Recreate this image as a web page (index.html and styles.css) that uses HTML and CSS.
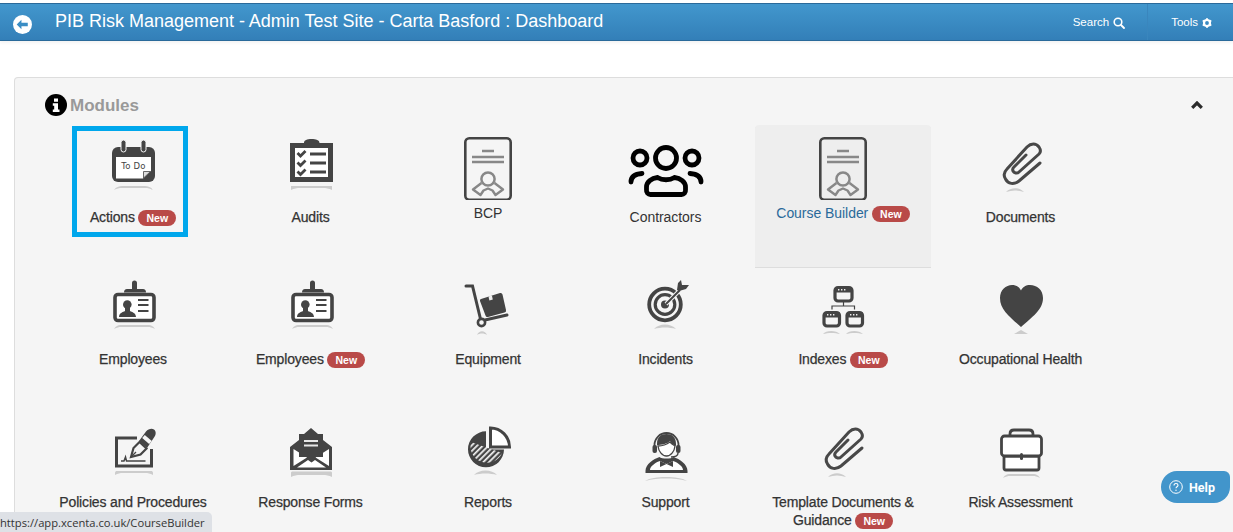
FILE: index.html
```html
<!DOCTYPE html>
<html lang="en">
<head>
<meta charset="utf-8">
<title>Dashboard</title>
<link rel="stylesheet" href="styles.css">
</head>
<body>
<svg class="defs" aria-hidden="true">
  <defs>
    <pattern id="hatch" width="4" height="4" patternUnits="userSpaceOnUse" patternTransform="rotate(45)">
      <rect width="4" height="4" fill="#444"/><rect width="1.7" height="4" fill="#f5f5f5"/>
    </pattern>
    <symbol id="i-cert" viewBox="0 0 80 68">
      <rect x="17.3" y="6.3" width="45.4" height="61.4" rx="4" fill="none" stroke="#444" stroke-width="2.6"/>
      <path d="M34 19h12M24 25h32M24 30h32" stroke="#888" stroke-width="2.4" fill="none"/>
      <circle cx="40" cy="47" r="6.600" fill="none" stroke="#888" stroke-width="2.500"/>
      <path d="M33.500 51L25 57.500L32.500 63L35.500 58.500L40 56.500L44.500 58.500L47.500 63L55 57.500L46.500 51" fill="none" stroke="#888" stroke-width="2.400" stroke-linejoin="round"/>
    </symbol>
    <symbol id="i-clip" viewBox="0 0 80 68">
      <path d="M59 31L38 49C33 53 27 52 24.500 47C22 43 23 40 26 37L46 15C50 11 55 11 58 15C60 18 60 20 58 22L38 40C36 42 33 41 32 39C31 37 32 36 33 35L45 23" fill="none" stroke="#484848" stroke-width="3" stroke-linecap="round"/>
      <path d="M25 60c5-5 13-5 18 0c-6-2-12-2-18 0z" fill="#ccc"/>
    </symbol>
    <symbol id="i-card" viewBox="0 0 80 68">
      <path d="M39 15V9a2.500 2.500 0 0 1 5 0v6h6c2 0 3 1.500 3 3.500H31c0-2 1-3.500 3-3.500z" fill="#444"/>
      <rect x="22" y="20.500" width="39" height="26" rx="3" fill="#fff" stroke="#444" stroke-width="3.600"/>
      <circle cx="34.300" cy="30.500" r="4.300" fill="#444"/>
      <path d="M26 43c0-4 4-5 6-6v-3h5v3c2 1 6 2 6 6z" fill="#444"/>
      <path d="M45 26h10.500M45 31h10.500M45 37h10.500" stroke="#444" stroke-width="1.900"/>
      <path d="M21 55c2-3 4-4 6-4h29c2 0 4 1 6 4c-3-1.500-5-2-7-2H28c-2 0-4 .5-7 2z" fill="#ccc"/>
    </symbol>
  </defs>
</svg>

<header class="topbar">
  <svg class="back" viewBox="0 0 18 18" aria-hidden="true"><circle cx="9" cy="9" r="9" fill="#fff"/><path d="M3.500 9L8 4.500v2.800h6v3.400H8v2.800z" fill="#3a8dc4"/></svg>
  <h1 class="title">PIB Risk Management - Admin Test Site - Carta Basford : Dashboard</h1>
  <nav class="tools">
    <a class="tool tool--search">Search
      <svg class="tool-icon" viewBox="0 0 12 12" aria-hidden="true"><circle cx="5" cy="5" r="3.800" fill="none" stroke="#fff" stroke-width="1.600"/><path d="M8 8l3 3" stroke="#fff" stroke-width="1.800" stroke-linecap="round"/></svg>
    </a>
    <a class="tool tool--tools">Tools
      <svg class="tool-icon tool-icon--gear" viewBox="0 0 10 10" aria-hidden="true"><circle cx="5" cy="5" r="3" fill="none" stroke="#fff" stroke-width="2.200"/><path d="M5 0v2M5 8v2M0.700 2.500l1.700 1M7.600 6.500l1.700 1M0.700 7.500l1.700-1M7.600 3.500l1.700-1" stroke="#fff" stroke-width="1.500"/></svg>
    </a>
  </nav>
</header>

<main class="panel">
  <div class="panel-head">
    <svg class="info" viewBox="0 0 22 22" aria-hidden="true"><circle cx="11" cy="11" r="11" fill="#000"/><path d="M9 4.500h4v3.200H9zM7.800 9.300h5.200v6.200h1.500v2.500H7.800v-2.500h1.400v-3.700H7.800z" fill="#fff"/></svg>
    <h2 class="panel-title">Modules</h2>
    <svg class="chev" viewBox="0 0 12 8" aria-hidden="true"><path d="M1.200 6.800L6 2l4.800 4.800" fill="none" stroke="#2b2b2b" stroke-width="3.200"/></svg>
  </div>

  <div class="grid">
    <a class="cell cell--focus">
      <svg class="icon" viewBox="0 0 80 68" aria-hidden="true">
        <rect x="19" y="15" width="43" height="35" rx="6" fill="#444"/>
        <path d="M23 25h35v14l-8 7.500H23z" fill="#fff"/>
        <path d="M50.500 46l7-6.500h-7z" fill="#ddd" stroke="#444" stroke-width=".8"/>
        <rect x="28" y="8" width="5" height="12" rx="2.500" fill="#444" stroke="#f5f5f5"/>
        <rect x="48" y="8" width="5" height="12" rx="2.500" fill="#444" stroke="#f5f5f5"/>
        <text class="todo" x="40.500" y="37" text-anchor="middle">To Do</text>
        <path d="M21 58c2-3 5-4 8-4h23c3 0 6 1 8 4c-3-1.500-5-2-8-2H29c-3 0-5 .5-8 2z" fill="#ccc"/>
      </svg>
      <span class="label">Actions <span class="badge">New</span></span>
    </a>
    <a class="cell">
      <svg class="icon" viewBox="0 0 80 68" aria-hidden="true">
        <path d="M19 11h14c0-3 3-4 7.500-4s8 1 8 4H62v39H19z" fill="#444"/>
        <rect x="24" y="16" width="33" height="29" fill="#fff"/>
        <path d="M26.500 21l3 3 5-5M26.500 30.500l3 3 5-5M26.500 39.500l3 3 5-5" fill="none" stroke="#444" stroke-width="2.800"/>
        <path d="M39 22h16M39 31h16M39 40h16" stroke="#444" stroke-width="2.800"/>
        <path d="M20 58v-4h41v4c-3-1.500-6-2-9-2H29c-3 0-6 .5-9 2z" fill="#ccc"/>
      </svg>
      <span class="label">Audits</span>
    </a>
    <a class="cell cell--cert">
      <svg class="icon" aria-hidden="true"><use href="#i-cert"/></svg>
      <span class="label label--plain">BCP</span>
    </a>
    <a class="cell">
      <svg class="icon" viewBox="0 0 80 68" aria-hidden="true">
        <g fill="none" stroke="#000" stroke-width="4.800" stroke-linecap="round">
          <circle cx="40" cy="26" r="10.500"/>
          <circle cx="14" cy="26" r="7"/>
          <circle cx="66" cy="26" r="7"/>
          <path d="M5 50c0-5 4-8 11-8.500M75 50c0-5-4-8-11-8.500"/>
          <path d="M20.500 55c0-5 5-9 11-9.500c5 3 12 3 17 0c6 .5 11 4.500 11 9.500v3a4 4 0 0 1-4 4.500h-31a4 4 0 0 1-4-4.500z"/>
        </g>
      </svg>
      <span class="label label--plain">Contractors</span>
    </a>
    <a class="cell cell--cert cell--hover">
      <svg class="icon" aria-hidden="true"><use href="#i-cert"/></svg>
      <span class="label label--plain label--link">Course Builder <span class="badge">New</span></span>
    </a>
    <a class="cell">
      <svg class="icon" aria-hidden="true"><use href="#i-clip"/></svg>
      <span class="label">Documents</span>
    </a>

    <a class="cell">
      <svg class="icon" aria-hidden="true"><use href="#i-card"/></svg>
      <span class="label">Employees</span>
    </a>
    <a class="cell">
      <svg class="icon" aria-hidden="true"><use href="#i-card"/></svg>
      <span class="label">Employees <span class="badge">New</span></span>
    </a>
    <a class="cell">
      <svg class="icon" viewBox="0 0 80 68" aria-hidden="true">
        <path d="M18 12h6.500l8 33M37 46l22-5" fill="none" stroke="#444" stroke-width="3" stroke-linecap="round"/>
        <circle cx="33.500" cy="48.500" r="3.600" fill="#f5f5f5" stroke="#444" stroke-width="2.600"/>
        <path d="M33 25L52 19Q54 18.500 54.500 20.500L58 36Q58.500 38 56.500 38.500L40 43Q38 43.500 37.500 41.500L32 27Q31.500 25.500 33 25Z" fill="#444"/>
        <path d="M40.500 22.500l3.400-1 .9 4-3.400 1z" fill="#eee"/>
        <path d="M29 61c2-5 8-5 10 0c-3-2-7-2-10 0z" fill="#ccc"/>
      </svg>
      <span class="label">Equipment</span>
    </a>
    <a class="cell">
      <svg class="icon" viewBox="0 0 80 68" aria-hidden="true">
        <circle cx="39" cy="30.500" r="15.800" fill="none" stroke="#444" stroke-width="3.800"/>
        <circle cx="39" cy="30.500" r="9.800" fill="none" stroke="#444" stroke-width="3.200"/>
        <circle cx="39" cy="30.500" r="4" fill="#444"/>
        <path d="M40 30L54 16" stroke="#f5f5f5" stroke-width="4"/>
        <path d="M40 30L54 16" stroke="#444" stroke-width="2"/>
        <path d="M51 16l1-7 3-3 1 5 7 0-3 4-7 2z" fill="#444"/>
        <path d="M28 55c5-6 17-6 22 0c-7-2-15-2-22 0z" fill="#ccc"/>
      </svg>
      <span class="label">Incidents</span>
    </a>
    <a class="cell">
      <svg class="icon" viewBox="0 0 80 68" aria-hidden="true">
        <g fill="none" stroke="#444" stroke-width="3.200">
          <rect x="32" y="13.500" width="17" height="13.500" rx="3"/>
          <rect x="21" y="38.500" width="15.500" height="13.500" rx="3"/>
          <rect x="44" y="38.500" width="15.500" height="13.500" rx="3"/>
          <path d="M29 35.500V32h22.500v3.500M40.500 28v4" stroke-width="1.200"/>
        </g>
        <path d="M32 13h17v5.500H32zM21 38h15.500v5.500H21zM44 38h15.500v5.500H44z" fill="#444"/>
        <path d="M35 15h1.400v1.400H35zM38 15h1.400v1.400H38zM41 15h1.400v1.400H41zM24 40h1.400v1.400H24zM27 40h1.400v1.400H27zM30 40h1.400v1.400H30zM47 40h1.400v1.400H47zM50 40h1.400v1.400H50zM53 40h1.400v1.400H53z" fill="#eee"/>
        <path d="M20 60c3-4 13-4 17 0c-5-1.500-12-1.500-17 0zM43 60c3-4 13-4 17 0c-5-1.500-12-1.500-17 0z" fill="#ccc"/>
      </svg>
      <span class="label">Indexes <span class="badge">New</span></span>
    </a>
    <a class="cell">
      <svg class="icon" viewBox="0 0 80 68" aria-hidden="true">
        <path d="M40 53C29 43 19 36 19 24C19 16 25 11 31 11C35 11 38.500 13 40 16.500C41.500 13 45 11 49 11C56 11 62 16 62 24C62 36 51 43 40 53Z" fill="#444"/>
        <path d="M33 60l7-4 7 4z" fill="#ccc"/>
      </svg>
      <span class="label">Occupational Health</span>
    </a>

    <a class="cell">
      <svg class="icon" viewBox="0 0 80 68" aria-hidden="true">
        <path d="M44 21H23.500v28h35V32" fill="none" stroke="#444" stroke-width="3"/>
        <path d="M28 44h3l1.500-4 1 4h19" fill="none" stroke="#444" stroke-width="1.500"/>
        <path d="M38 40l2.500-9 6-6 7 6.500-6 6z" fill="#f5f5f5" stroke="#444" stroke-width="2.200"/>
        <path d="M38 40l5-5" stroke="#444" stroke-width="1.300"/>
        <path d="M46 24l7-9.500c2.500-3 6-3.500 8-2c2.500 2 2 5.500 0 8L54 31z" fill="#444"/>
        <path d="M50.500 19.500l7 6" stroke="#f5f5f5" stroke-width="4"/>
        <path d="M22 58v-2c0-1.500 1-2 2-2h34c1 0 2 .5 2 2v2c-3-1.500-5-2-8-2H30c-3 0-5 .5-8 2z" fill="#ccc"/>
      </svg>
      <span class="label">Policies and Procedures</span>
    </a>
    <a class="cell">
      <svg class="icon" viewBox="0 0 80 68" aria-hidden="true">
        <path d="M19 30L28 23V17H33L40 11L47 17H52V23L61 30V53H19Z" fill="#444"/>
        <path d="M22.500 32V49L36 40.500ZM58 32V49L44.500 40.500ZM26 50.500H55L44 43L40.500 45.500L37 43Z" fill="#fff"/>
        <rect x="28" y="18" width="24" height="22" fill="#444"/>
        <path d="M33 24h14M33 28.500h14" stroke="#e8e8e8" stroke-width="1.800"/>
        <path d="M20 60v-4c0-1 .7-1.500 1.500-1.500h38c.8 0 1.500.5 1.500 1.500v4c-3-1.500-6-2-9-2H29c-3 0-6 .5-9 2z" fill="#ccc"/>
      </svg>
      <span class="label">Response Forms</span>
    </a>
    <a class="cell">
      <svg class="icon" viewBox="0 0 80 68" aria-hidden="true">
        <path d="M38 14.300A18 18 0 1 0 56 32.500H38z" fill="#444"/>
        <path d="M23 25L54 36A16.500 16.500 0 0 1 23 25Z" fill="url(#hatch)"/>
        <path d="M42.500 11a19 19 0 0 1 19 19h-19z" fill="#fff" stroke="#444" stroke-width="3"/>
        <path d="M26 58c5-6 18-6 23 0c-7-2-16-2-23 0z" fill="#ccc"/>
      </svg>
      <span class="label">Reports</span>
    </a>
    <a class="cell">
      <svg class="icon" viewBox="0 0 80 68" aria-hidden="true">
        <path d="M28.500 33V28a12 12 0 0 1 24 0v5" fill="none" stroke="#444" stroke-width="1.800"/>
        <path d="M31 27c0-7 4-10 9.500-10s9.500 3 9.500 10v2c-3-1-5-3-6-5c-3 3-9 4-13 4z" fill="#444"/>
        <path d="M32 29c3 0 8-1 12-4c1 2 3 3 5 4c-.5 5-4 10-8.500 10S32.500 34 32 29z" fill="#fff" stroke="#444" stroke-width="1.300"/>
        <rect x="26.500" y="28" width="4.500" height="8" rx="2" fill="#444"/>
        <rect x="50" y="28" width="4.500" height="8" rx="2" fill="#444"/>
        <path d="M52 36c0 3-3 4-7 4" fill="none" stroke="#444" stroke-width="1.400"/>
        <path d="M19.500 54c0-7 8-12 14-14c2 2 12 2 14 0c6 2 14 7 14 14v2h-42z" fill="#444"/>
        <path d="M24 53c0-3 4-7 10-9l6.500 3 6.500-3c6 2 10 6 10 9z" fill="#fff"/>
        <path d="M34 44l6.500 3-6.500 3zM47 44l-6.500 3 6.500 3z" fill="#444"/>
        <path d="M19 64c5-3 12-4 21-4s16 1 21 4c-7-2-14-2.500-21-2.500s-14 .5-21 2.500z" fill="#ccc"/>
      </svg>
      <span class="label">Support</span>
    </a>
    <a class="cell">
      <svg class="icon" aria-hidden="true"><use href="#i-clip"/></svg>
      <span class="label">Template Documents &amp;<br>Guidance <span class="badge">New</span></span>
    </a>
    <a class="cell">
      <svg class="icon" viewBox="0 0 80 68" aria-hidden="true">
        <path d="M29 18v-1c0-3 2-4 4-4h15c2 0 4 1 4 4v1" fill="none" stroke="#444" stroke-width="2.800"/>
        <path d="M23 39v12c0 1.500 1 2 2 2h31c1 0 2-.5 2-2V39z" fill="#fff" stroke="#444" stroke-width="2.800"/>
        <rect x="20.500" y="19" width="40" height="20" rx="3" fill="#fff" stroke="#444" stroke-width="2.800"/>
        <rect x="39" y="36" width="3" height="7" rx="1.500" fill="#444"/>
        <path d="M22 61c2-3 4-4 6-4h25c2 0 4 1 6 4c-3-1.500-5-2-7-2H29c-2 0-4 .5-7 2z" fill="#ccc"/>
      </svg>
      <span class="label">Risk Assessment</span>
    </a>
  </div>
</main>

<div class="status">https://app.xcenta.co.uk/CourseBuilder</div>
<a class="help">
  <svg class="help-icon" viewBox="0 0 14 14" aria-hidden="true"><circle cx="7" cy="7" r="6.300" fill="none" stroke="#fff" stroke-width="1"/><path d="M5 5.500c0-1.300 1-2 2-2s2 .7 2 1.800c0 1.500-2 1.500-2 3" fill="none" stroke="#fff" stroke-width="1.100"/><circle cx="7" cy="10.200" r=".7" fill="#fff"/></svg>
  Help
</a>
</body>
</html>
```

FILE: styles.css
```css
html, body {
  margin: 0;
  padding: 0;
  height: 532px;
  overflow: hidden;
  background: #fff;
  font-family: "Liberation Sans", Arial, sans-serif;
  color: #333;
}

.defs {
  display: block;
  width: 0;
  height: 0;
  position: absolute;
}

.topbar {
  box-sizing: border-box;
  display: flex;
  align-items: center;
  height: 38px;
  margin-top: 3px;
  padding-left: 13px;
  background: linear-gradient(#4297cd, #337fb8);
  border-top: 1px solid #2a6a9a;
  border-bottom: 1px solid #2a6a9a;
  box-shadow: 0 2px 3px rgba(0, 0, 0, .05);
}

.back {
  width: 19px;
  height: 19px;
  margin-top: 4px;
  flex: none;
}

.title {
  margin: 0 0 2px 23px;
  font-size: 18px;
  font-weight: 400;
  letter-spacing: -.01px;
  color: #fff;
  white-space: nowrap;
}

.tools {
  display: flex;
  align-self: stretch;
  margin-left: auto;
}

.tool {
  display: flex;
  align-items: center;
  gap: 4px;
  font-size: 11.500px;
  color: #fff;
  padding-bottom: 1px;
}

.tool--search {
  padding-right: 22px;
  border-right: 1px solid #3a86bd;
}

.tool--tools {
  padding-left: 23px;
  padding-right: 21px;
}

.tool-icon {
  width: 12px;
  height: 12px;
  margin-top: 3px;
}

.tool-icon--gear {
  width: 10px;
  height: 10px;
}

.panel {
  margin: 36px -10px 0 14px;
  background: #f5f5f5;
  border: 1px solid #ddd;
  border-bottom: 0;
  border-radius: 4px 4px 0 0;
  height: 454px;
}

.panel-head {
  display: flex;
  align-items: center;
  gap: 3px;
  height: 22px;
  padding: 16px 39px 9px 30px;
}

.info {
  width: 22px;
  height: 22px;
  flex: none;
}

.panel-title {
  margin: 1px 0 0;
  font-size: 17px;
  font-weight: 700;
  color: #999;
}

.chev {
  width: 12px;
  height: 8px;
  margin-left: auto;
}

.grid {
  display: grid;
  grid-template-columns: repeat(6, 176px);
  grid-template-rows: 142px 143px auto;
  column-gap: 1.5px;
  padding-left: 30px;
}

.cell {
  position: relative;
  display: flex;
  flex-direction: column;
  align-items: center;
  padding-top: 7px;
}

.cell--hover {
  background: #eee;
  border-radius: 4px 4px 0 0;
  box-shadow: 0 1px 0 #ddd;
}

.cell--focus::after {
  content: "";
  position: absolute;
  left: 27px;
  top: 1px;
  width: 116px;
  height: 111px;
  box-sizing: border-box;
  border: 5px solid #00a7ec;
}

.icon {
  display: block;
  width: 80px;
  height: 68px;
  overflow: visible;
  flex: none;
}

.todo {
  font-family: "DejaVu Sans", sans-serif;
  font-size: 8.500px;
  font-weight: 400;
  letter-spacing: .2px;
  fill: #444;
}

.label {
  margin-top: 8px;
  font-size: 14px;
  line-height: 18px;
  letter-spacing: -.16px;
  text-align: center;
  color: #333;
  -webkit-text-stroke: .25px #333;
  white-space: nowrap;
}

.label--plain {
  letter-spacing: -.05px;
  -webkit-text-stroke: 0;
}

.cell--cert .label {
  margin-top: 4px;
}

.label--link {
  color: #2a6a9a;
}

.badge {
  display: inline-block;
  box-sizing: border-box;
  height: 16px;
  padding: 0 8px;
  border-radius: 8px;
  background: #b94a48;
  color: #fff;
  font-size: 10.500px;
  font-weight: 700;
  line-height: 16px;
  letter-spacing: 0;
  vertical-align: 0;
  -webkit-text-stroke: 0;
}

.status {
  position: fixed;
  left: 0;
  bottom: 0;
  width: 212px;
  height: 20px;
  box-sizing: border-box;
  background: #dee1e6;
  border-top-right-radius: 5px;
  font-family: "Open Sans", sans-serif;
  font-size: 11.200px;
  line-height: 21px;
  color: #333;
  white-space: nowrap;
  overflow: hidden;
}

.help {
  position: fixed;
  left: 1161px;
  top: 471px;
  width: 69px;
  height: 32px;
  box-sizing: border-box;
  display: flex;
  align-items: center;
  gap: 6px;
  padding-left: 8px;
  background: #4295cb;
  border-radius: 16px 6px 16px 16px;
  color: #fff;
  font-family: Roboto, sans-serif;
  font-size: 12.500px;
  font-weight: 700;
}

.help-icon {
  width: 14px;
  height: 14px;
  flex: none;
}
```
